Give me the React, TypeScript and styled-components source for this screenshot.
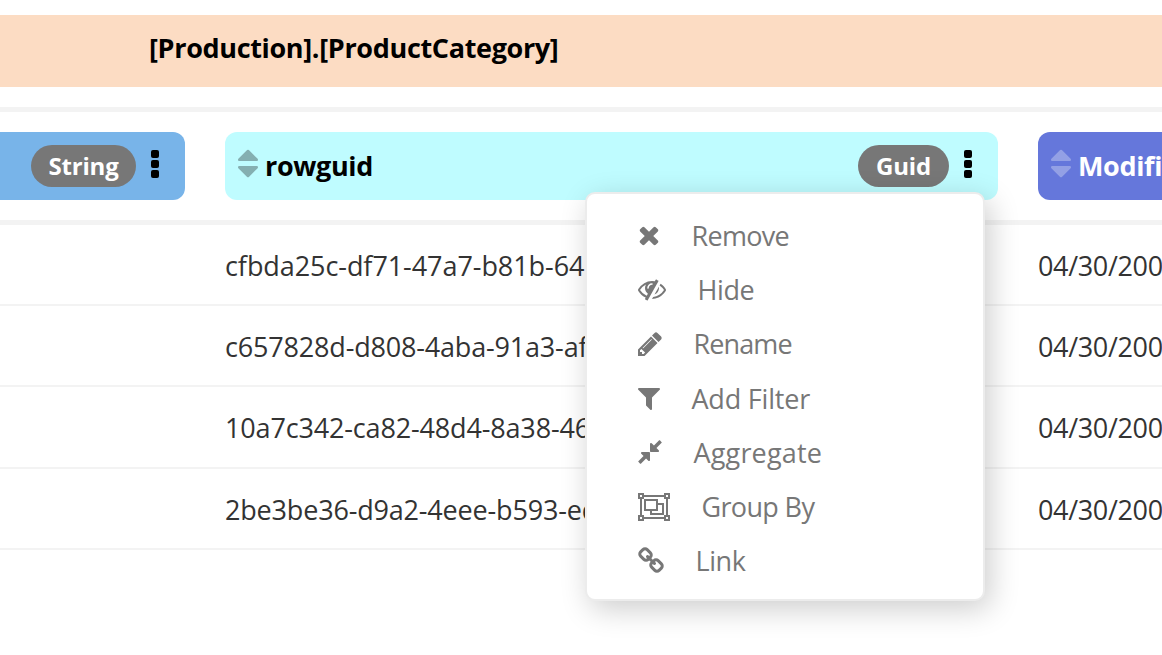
import React from "react";
import styled, { createGlobalStyle } from "styled-components";

const GlobalStyle = createGlobalStyle`
  * { box-sizing: border-box; }
  html, body { margin: 0; background: #fff; overflow: hidden; }
  body { font-family: "Open Sans", "Noto Sans", sans-serif; font-size: 27px; color: #333; }
  svg { display: block; flex: none; }
`;

const Page = styled.main`
  position: relative;
  width: 1162px;
  height: 655px;
  padding-top: 15px;
  overflow: hidden;
`;

const TableTitle = styled.h1`
  margin: 0 0 20px;
  height: 72px;
  padding: 14px 0 0 149px;
  background: #fcdcc3;
  color: #000;
  font-size: 27px;
  line-height: 38px;
  font-weight: 700;
  letter-spacing: -0.34px;
  white-space: nowrap;
`;

const COLUMNS = "185px 773px 773px";

const HeaderRow = styled.div`
  display: grid;
  grid-template-columns: ${COLUMNS};
  column-gap: 40px;
  height: 118px;
  padding: 20px 0;
  border-top: 5px solid #f3f3f3;
  border-bottom: 5px solid #f3f3f3;
`;

const HeaderCell = styled.div<{ $bg: string; $color?: string; $flushLeft?: boolean }>`
  display: flex;
  align-items: center;
  height: 68px;
  padding: 0 26px 0 13px;
  border-radius: ${(p) => (p.$flushLeft ? "0 12px 12px 0" : "12px")};
  background: ${(p) => p.$bg};
  color: ${(p) => p.$color ?? "#000"};
`;

const ColumnName = styled.span`
  margin-left: 7px;
  font-weight: 700;
  letter-spacing: -0.35px;
  line-height: 38px;
`;

const SortIcon = styled.svg`
  width: 20px;
  height: 35px;
  margin-bottom: 5px;
  fill: currentColor;
  opacity: 0.3;
`;

const TypeBadge = styled.span<{ $width: number }>`
  display: flex;
  align-items: center;
  justify-content: center;
  width: ${(p) => p.$width}px;
  height: 42px;
  margin-left: auto;
  padding-bottom: 2px;
  border-radius: 21px;
  background: #777;
  color: #fff;
  font-size: 24px;
  font-weight: 700;
  letter-spacing: -0.2px;
`;

const MoreIcon = styled.svg`
  width: 8px;
  height: 28px;
  margin: 0 0 4px 15px;
  fill: #000;
`;

const Row = styled.div`
  display: grid;
  grid-template-columns: ${COLUMNS};
  column-gap: 40px;
  height: 81.2px;
  padding-top: 22px;
  border-bottom: 2px solid #f3f3f3;
  line-height: 38px;
  white-space: nowrap;
`;

const Cell = styled.span<{ $tracking?: number }>`
  letter-spacing: ${(p) => p.$tracking ?? -0.35}px;
`;

const Menu = styled.ul`
  position: absolute;
  left: 585px;
  top: 192px;
  width: 400px;
  height: 409px;
  margin: 0;
  padding: 14px 0 0 50.5px;
  list-style: none;
  border: 2px solid #ececec;
  border-radius: 10px;
  background: #fff;
  box-shadow: 5px 8px 30px rgba(0, 0, 0, 0.2);
  color: #777;
`;

const MenuItem = styled.li<{ $tracking: number }>`
  display: flex;
  align-items: center;
  gap: 32px;
  height: 54.3px;
  letter-spacing: ${(p) => p.$tracking}px;
  white-space: nowrap;
`;

const Glyph = styled.svg`
  height: 28px;
  fill: currentColor;
  fill-rule: evenodd;
`;

const menuItems = [
  {
    label: "Remove",
    tracking: -0.7,
    width: 22,
    viewBox: "192 0 1408 1792",
    d: "M1490 1322q0 40-28 68l-136 136q-28 28-68 28t-68-28l-294-294-294 294q-28 28-68 28t-68-28l-136-136q-28-28-28-68t28-68l294-294-294-294q-28-28-28-68t28-68l136-136q28-28 68-28t68 28l294 294 294-294q28-28 68-28t68 28l136 136q28 28 28 68t-28 68l-294 294 294 294q28 28 28 68z",
  },
  {
    label: "Hide",
    tracking: -0.4,
    width: 28,
    viewBox: "0 0 1792 1792",
    d: "M555 1335l78-141q-87-63-136-159t-49-203q0-121 61-225-229 117-381 353 167 258 427 375zm389-759q0-20-14-34t-34-14q-125 0-214.500 89.500t-89.500 214.500q0 20 14 34t34 14 34-14 14-34q0-86 61-147t147-61q20 0 34-14t14-34zm363-191q0 7-1 9-106 189-316 567t-315 566l-49 89q-10 16-28 16-12 0-134-70-16-10-16-28 0-12 44-87-143-65-263.500-173t-208.500-245q-20-31-20-69t20-69q153-235 380-371t496-136q89 0 180 17l54-97q10-16 28-16 5 0 18 6t31 15.500 33 18.500 31.500 18.500 19.500 11.500q16 10 16 27zm37 447q0 139-79 253.500t-209 164.500l280-502q8 45 8 84zm448 128q0 35-20 69-39 64-109 145-150 172-347.500 267t-419.500 95l74-132q212-18 392.500-137t301.500-307q-115-179-282-294l63-112q95 64 182.500 153t144.500 184q20 34 20 69z",
  },
  {
    label: "Rename",
    tracking: -0.9,
    width: 24,
    viewBox: "128 0 1536 1792",
    d: "M491 1536l91-91-235-235-91 91v107h128v128h107zm523-928q0-22-22-22-10 0-17 7l-542 542q-7 7-7 17 0 22 22 22 10 0 17-7l542-542q7-7 7-17zm-54-192l416 416-832 832h-416v-416zm683 96q0 53-37 90l-166 166-416-416 166-165q36-38 90-38 53 0 91 38l235 234q37 39 37 91z",
  },
  {
    label: "Add Filter",
    tracking: -0.2,
    width: 22,
    viewBox: "192 0 1408 1792",
    d: "M1595 295q17 41-14 70l-493 493v742q0 42-39 59-13 5-25 5-27 0-45-19l-256-256q-19-19-19-45v-486l-493-493q-31-29-14-70 17-39 59-39h1280q42 0 59 39z",
  },
  {
    label: "Aggregate",
    tracking: 0.17,
    width: 24,
    viewBox: "128 0 1536 1792",
    d: "M896 960v448q0 26-19 45t-45 19-45-19l-144-144-332 332q-10 10-23 10t-23-10l-114-114q-10-10-10-23t10-23l332-332-144-144q-19-19-19-45t19-45 45-19h448q26 0 45 19t19 45zm755-672q0 13-10 23l-332 332 144 144q19 19 19 45t-19 45-45 19h-448q-26 0-45-19t-19-45v-448q0-26 19-45t45-19 45 19l144 144 332-332q10-10 23-10t23 10l114 114q10 10 10 23z",
  },
  {
    label: "Group By",
    tracking: -0.65,
    width: 32,
    viewBox: "0 0 2048 1792",
    d: "M2048 384h-128v1024h128v384h-384v-128h-1280v128h-384v-384h128v-1024h-128v-384h384v128h1280v-128h384v384zm-256-256v128h128v-128h-128zm-1664 0v128h128v-128h-128zm128 1536v-128h-128v128h128zm1408-128v-128h128v-1024h-128v-128h-1280v128h-128v1024h128v128h1280zm256 128v-128h-128v128h128zM1280 640h384v768h-896v-256h-384v-768h896zM512 1024h640v-512h-640zM1536 1280v-512h-256v384h-384v128z",
  },
  {
    label: "Link",
    tracking: -0.4,
    width: 26,
    viewBox: "64 0 1664 1792",
    d: "M1520 1216q0-40-28-68l-208-208q-28-28-68-28-42 0-72 32 3 3 19 18.500t21.500 21.500 15 19 13 25.500 3.500 27.500q0 40-28 68t-68 28q-15 0-27.500-3.500t-25.500-13-19-15-21.500-21.500-18.500-19q-33 31-33 73 0 40 28 68l206 207q27 27 68 27 40 0 68-26l147-146q28-28 28-67zm-703-705q0-40-28-68l-206-207q-28-28-68-28-39 0-68 27l-147 146q-28 28-28 67 0 40 28 68l208 208q27 27 68 27 42 0 72-31-3-3-19-18.500t-21.500-21.500-15-19-13-25.500-3.500-27.500q0-40 28-68t68-28q15 0 27.500 3.500t25.500 13 19 15 21.500 21.500 18.500 19q33-31 33-73zm895 705q0 120-85 203l-147 146q-83 83-203 83-121 0-204-85l-206-207q-83-83-83-203 0-123 88-209l-88-88q-86 88-208 88-120 0-204-84l-208-208q-84-84-84-204t85-203l147-146q83-83 203-83 121 0 204 85l206 207q83 83 83 203 0 123-88 209l88 88q86-88 208-88 120 0 204 84l208 208q84 84 84 204z",
  },
];

const rows = [
  { guid: "cfbda25c-df71-47a7-b81b-64", tracking: -0.07 },
  { guid: "c657828d-d808-4aba-91a3-af", tracking: -0.18 },
  { guid: "10a7c342-ca82-48d4-8a38-46", tracking: -0.16 },
  { guid: "2be3be36-d9a2-4eee-b593-ed", tracking: -0.18 },
];

const Sort = () => (
  <SortIcon viewBox="384 0 1024 1792">
    <path d="M1408 1088q0 26-19 45l-448 448q-19 19-45 19t-45-19l-448-448q-19-19-19-45t19-45 45-19h896q26 0 45 19t19 45zm0-384q0 26-19 45t-45 19h-896q-26 0-45-19t-19-45 19-45l448-448q19-19 45-19t45 19l448 448q19 19 19 45z" />
  </SortIcon>
);

const More = () => (
  <MoreIcon viewBox="0 0 8 28">
    <rect width="8" height="8" rx="2" />
    <rect y="10" width="8" height="8" rx="2" />
    <rect y="20" width="8" height="8" rx="2" />
  </MoreIcon>
);

export default function App() {
  return (
    <Page>
      <GlobalStyle />
      <TableTitle>[Production].[ProductCategory]</TableTitle>
      <HeaderRow>
        <HeaderCell $bg="#78b4e9" $flushLeft>
          <TypeBadge $width={105}>String</TypeBadge>
          <More />
        </HeaderCell>
        <HeaderCell $bg="#bffcff">
          <Sort />
          <ColumnName>rowguid</ColumnName>
          <TypeBadge $width={91}>Guid</TypeBadge>
          <More />
        </HeaderCell>
        <HeaderCell $bg="#6577db" $color="#fff">
          <Sort />
          <ColumnName>Modifi</ColumnName>
        </HeaderCell>
      </HeaderRow>
      {rows.map((row) => (
        <Row key={row.guid}>
          <span />
          <Cell $tracking={row.tracking}>{row.guid}</Cell>
          <Cell>04/30/200</Cell>
        </Row>
      ))}
      <Menu>
        {menuItems.map((item) => (
          <MenuItem key={item.label} $tracking={item.tracking}>
            <Glyph width={item.width} viewBox={item.viewBox}>
              <path d={item.d} />
            </Glyph>
            <span>{item.label}</span>
          </MenuItem>
        ))}
      </Menu>
    </Page>
  );
}
